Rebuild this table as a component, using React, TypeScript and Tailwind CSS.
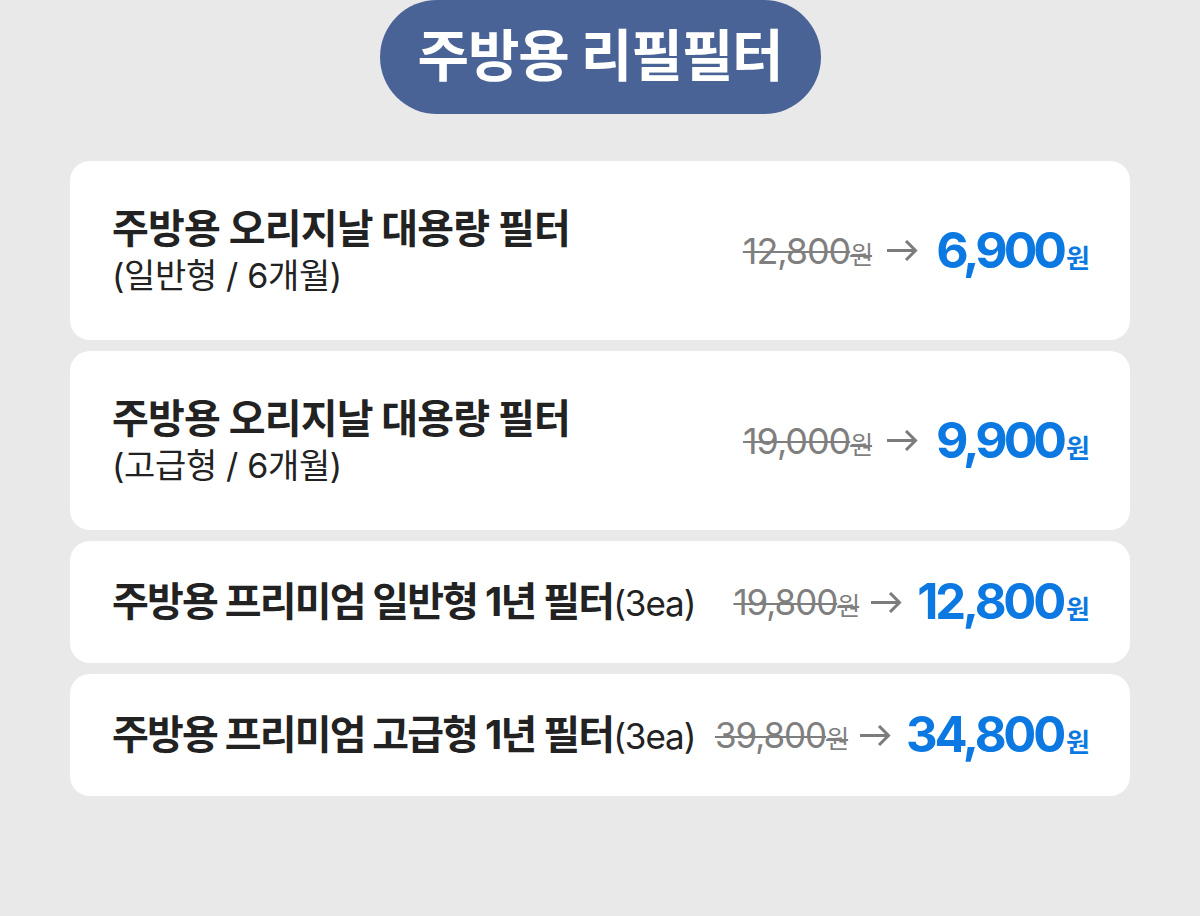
import React from 'react';

const KR = '[font-family:Inter,"Noto_Sans_CJK_KR",sans-serif]';

interface Item {
  title: string;
  sub?: string;
  suffix?: string;
  was: string;
  now: string;
  tall: boolean;
}

const items: Item[] = [
  { title: '주방용 오리지날 대용량 필터', sub: '(일반형 / 6개월)', was: '12,800', now: '6,900', tall: true },
  { title: '주방용 오리지날 대용량 필터', sub: '(고급형 / 6개월)', was: '19,000', now: '9,900', tall: true },
  { title: '주방용 프리미엄 일반형 1년 필터', suffix: '(3ea)', was: '19,800', now: '12,800', tall: false },
  { title: '주방용 프리미엄 고급형 1년 필터', suffix: '(3ea)', was: '39,800', now: '34,800', tall: false },
];

function Arrow() {
  return (
    <svg width="31" height="21" viewBox="0 0 31 21" fill="none" stroke="#7c7c7c" strokeWidth="3" strokeLinecap="butt" strokeLinejoin="miter">
      <path d="M0 10.5H28.5" />
      <path d="M19 1L28.5 10.5L19 20" />
    </svg>
  );
}

function PriceCard({ item }: { item: Item }) {
  return (
    <div
      className={`flex items-center justify-between rounded-[20px] bg-white pl-[42px] pr-[40px] ${
        item.tall ? 'h-[179px]' : 'h-[122px]'
      }`}
    >
      {/* name */}
      <div className="flex flex-col text-[#222222]">
        <p className={`whitespace-nowrap text-[40px] font-bold leading-[50px] ${item.tall ? 'tracking-[-0.02em]' : 'tracking-[-0.045em]'}`}>
          {item.title}
          {item.suffix && <span className="text-[35px] font-normal tracking-[-0.03em]">{item.suffix}</span>}
        </p>
        {item.sub && <p className="whitespace-nowrap text-[34px] leading-[44px] tracking-[-0.01em]">{item.sub}</p>}
      </div>

      {/* price */}
      <div className={`flex items-center ${item.tall ? 'gap-[15px]' : 'gap-[12px]'}`}>
        <span
          className={`flex items-baseline tracking-[-0.03em] text-[#7f7f7f] line-through decoration-[2px] decoration-[#7f7f7f] ${
            item.tall ? 'text-[36px]' : 'text-[35px]'
          }`}
        >
          {item.was}
          <span className="text-[25px]">원</span>
        </span>
        <Arrow />
        <span className={`ml-[3px] flex items-baseline font-bold text-[#0b79e1] ${item.tall ? 'text-[50px]' : 'text-[49px]'}`}>
          <span className={item.tall ? 'tracking-[-0.08em]' : 'tracking-[-0.065em]'}>{item.now}</span>
          <span className="ml-[3px] text-[26px] font-semibold">원</span>
        </span>
      </div>
    </div>
  );
}

export default function App() {
  return (
    <div className={`min-h-[916px] w-full bg-[#e9e9e9] ${KR}`}>
      <div className="flex justify-center">
        <div className="flex h-[114px] w-[441px] items-center justify-center rounded-full bg-[#4a6396]">
          <h1 className="pb-[2px] text-[56px] font-bold tracking-[-0.02em] text-white">주방용 리필필터</h1>
        </div>
      </div>

      <div className="mx-[70px] mt-[47px] flex flex-col gap-[11px]">
        {items.map((item, i) => (
          <PriceCard key={i} item={item} />
        ))}
      </div>
    </div>
  );
}
